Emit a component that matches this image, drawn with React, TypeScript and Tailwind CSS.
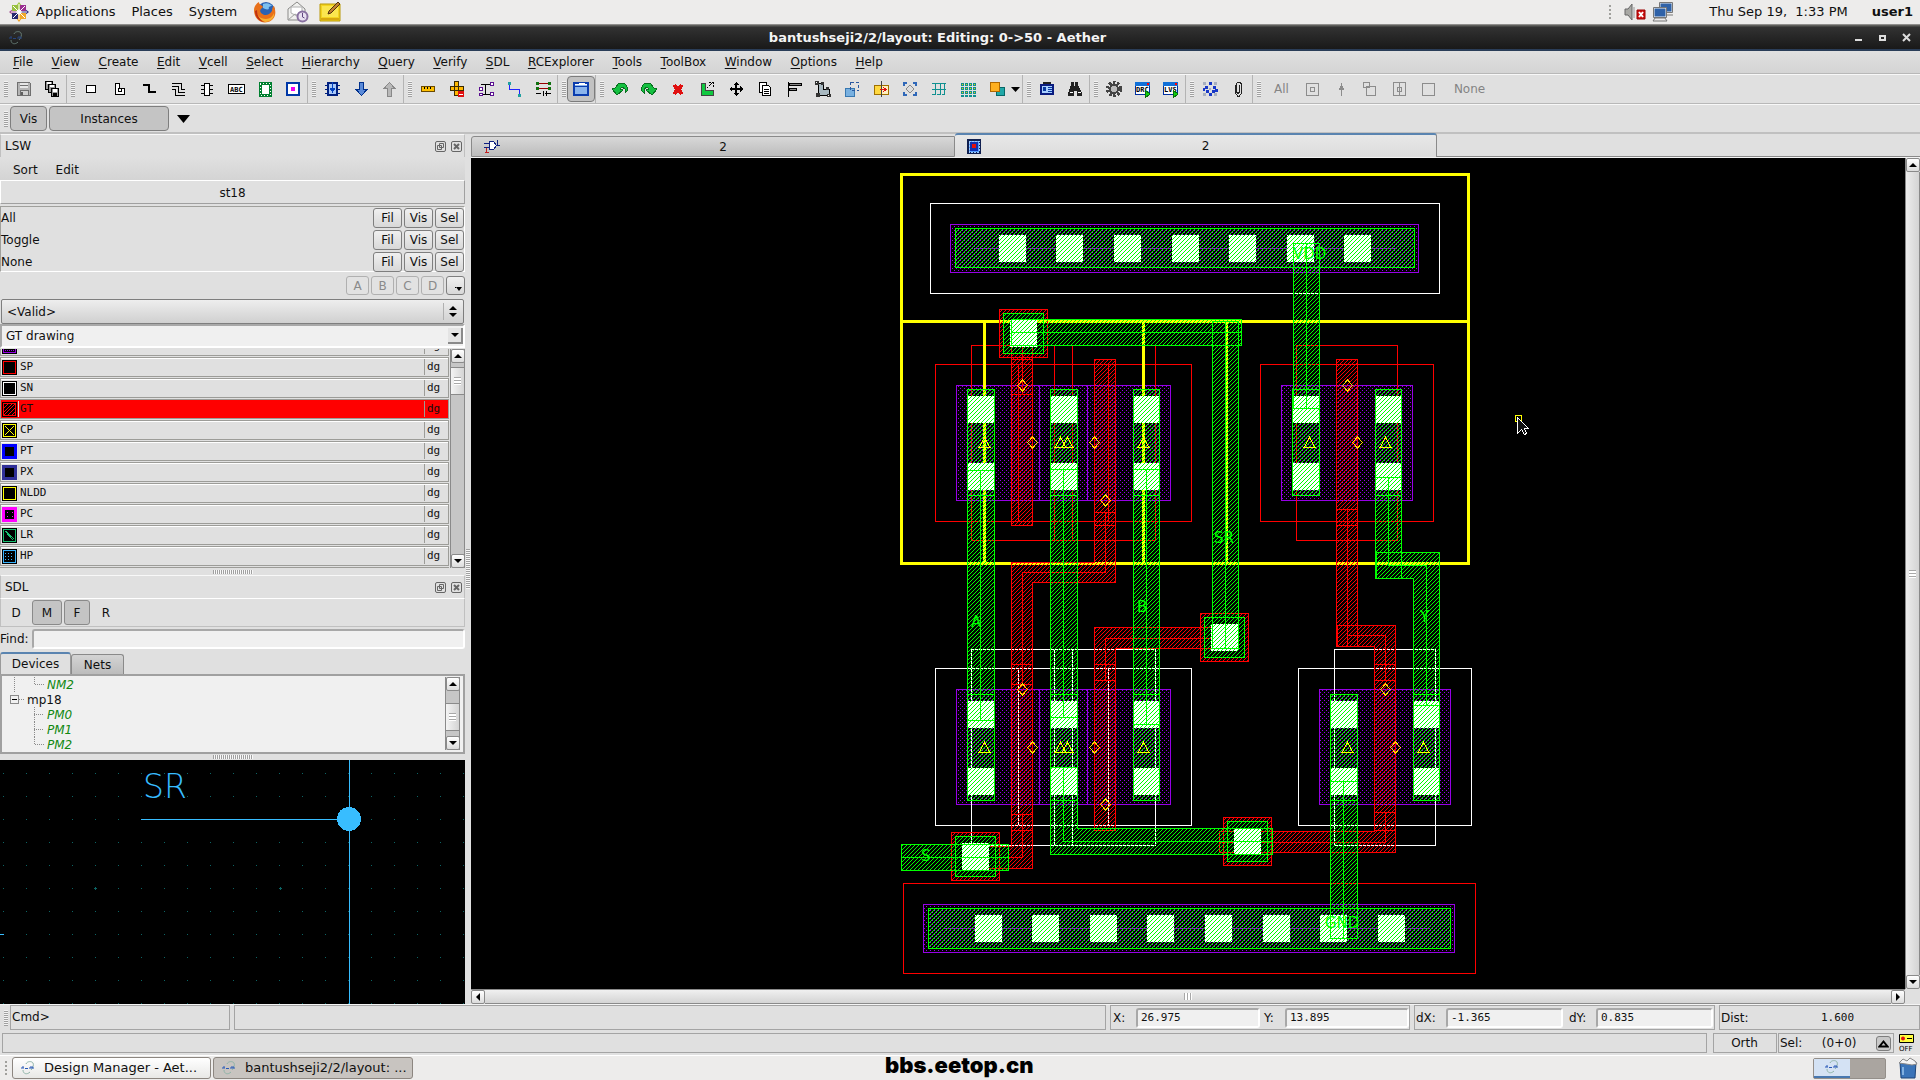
import React from 'react';

const MENUS = ['File', 'View', 'Create', 'Edit', 'Vcell', 'Select', 'Hierarchy', 'Query', 'Verify', 'SDL', 'RCExplorer', 'Tools', 'ToolBox', 'Window', 'Options', 'Help'];

const GREEN = '#00ff00';
const RED = '#ff0000';
const PURPLE = '#9600e6';
const YELLOW = '#ffff00';
const WHITE = '#ffffff';

/* ---------- toolbar icons, all on a 20x20 grid ---------- */

const ICONS: Record<string, React.ReactNode> = {
  save: (
    <>
      <path d="M3.5 3.5h12l1 1v12h-13z" fill="#b4b4b4" stroke="#707070" />
      <path d="M6 4h8v5H6z" fill="#e6e6e6" />
      <path d="M6 6.5h8M6 11.5h8v5H6z" stroke="#707070" fill="#d0d0d0" />
      <path d="M7 13h2v3H7z" fill="#606060" />
    </>
  ),
  saveAll: (
    <>
      <path d="M3.500 2.500h7v8h-7z" fill="#999" stroke="#000" />
      <path d="M6.500 5.500h7v8h-7z" fill="#999" stroke="#000" />
      <path d="M9.500 9.500h7v8h-7z" fill="#999" stroke="#000" />
      <path d="M5 3h4v2H5zM8 6h4v2H8zM11 10h4v3h-4z" fill="#fff" />
      <path d="M11 14h4v3h-4z" fill="#000" />
    </>
  ),
  rect: <path d="M5.500 6.500h9v7h-9z" fill="#fff" stroke="#000" />,
  polygon: (
    <>
      <path d="M5.500 4.500h4v5h5v6h-9z" fill="#fff" stroke="#000" />
      <path d="M8.500 9.500h3v3h-3z" fill="#fff" stroke="#000" />
    </>
  ),
  path: <path d="M4 6h6v7h7" fill="none" stroke="#000" strokeWidth="2" />,
  bus: <path d="M4 4.500h9v6h4M4 7.500h6v6h7M4 10.500h3v6h10" fill="none" stroke="#000" />,
  chip: (
    <>
      <path d="M7.500 4.500h5v12h-5z" fill="#fff" stroke="#000" />
      <path d="M4 6.500h3M4 10.500h3M4 14.500h3M13 6.500h3M13 10.500h3M13 14.500h3" stroke="#000" />
    </>
  ),
  abc: (
    <>
      <path d="M2.500 5.500h16v9h-16z" fill="#fff" stroke="#000" />
      <text x="4" y="13" fontSize="7" fontWeight="bold" fontFamily="DejaVu Sans Mono, monospace">ABC</text>
    </>
  ),
  guard: (
    <>
      <path d="M5 4h10v12H5z" fill="#fff" stroke="#008030" strokeWidth="3" />
      <path d="M5 4h10v12H5z" fill="none" stroke="#fff" strokeDasharray="1 2" />
    </>
  ),
  pin: (
    <>
      <path d="M4 4h12v12H4z" fill="#fff" stroke="#0038a8" strokeWidth="2" />
      <path d="M8 8h4v4H8z" fill="#f000f0" />
    </>
  ),
  chipDown: (
    <>
      <path d="M6 4h9v12H6z" fill="#a8c8f8" stroke="#002080" strokeWidth="2" />
      <path d="M3 6.500h2M3 10.500h2M3 14.500h2M16 6.500h2M16 10.500h2M16 14.500h2" stroke="#002080" />
      <path d="M10.500 3v7M8 9h5l-2.500 4z" fill="#0040c0" stroke="#0040c0" />
    </>
  ),
  down: <path d="M8.500 3.500h4v7h3.500l-5.500 6-5.500-6h3.500z" fill="#5a8ad8" stroke="#00308c" />,
  up: <path d="M8.500 17.500h4v-8h3.500l-5.500-6-5.500 6h3.500z" fill="#b8b8b8" stroke="#888" />,
  ruler: (
    <>
      <path d="M3.500 7.500h13v5h-13z" fill="#ffc000" stroke="#6b4a00" />
      <path d="M6.500 8v2M9.500 8v2M12.500 8v2" stroke="#000" />
    </>
  ),
  rulerOff: (
    <>
      <path d="M7.500 2.500h4v14h-4zM3.500 7.500h13v4h-13z" fill="#ffb800" stroke="#3b2a00" />
      <circle cx="14" cy="15" r="3.500" fill="#e01010" />
      <path d="M12 15h4" stroke="#fff" />
    </>
  ),
  net: (
    <>
      <path d="M5 5.500h10M5 15.500h10M9.500 5v10" stroke="#000" />
      <path d="M3.500 8.500h3v3h-3zM14.500 3.500h3v3h-3zM3.500 14.500h3v2h-3zM14.500 13.500h3v3h-3z" fill="#fff" stroke="#5a1090" />
    </>
  ),
  wire: (
    <>
      <path d="M4.500 4v6h10v6" fill="none" stroke="#2222ff" />
      <path d="M3 3h3v3H3zM13 15h3v3h-3z" fill="#20a0a0" />
    </>
  ),
  align: (
    <>
      <path d="M4 4.500h13M4 9.500h13" stroke="#900" />
      <path d="M3 3h3v3H3zM15 3h3v3h-3zM3 8h3v3H3zM15 8h3v3h-3z" fill="#107010" />
      <path d="M3 14.500h5M12 14.500h6M10.500 12v5M13.500 12v5" stroke="#000" />
    </>
  ),
  window: (
    <>
      <path d="M3 4h14v12H3z" fill="#8ab4ec" stroke="#0a3cae" strokeWidth="2" />
      <path d="M4 5.500h12M8 4h6" stroke="#fff" />
      <path d="M3 7.500h14" stroke="#0a3cae" />
    </>
  ),
  undo: <path d="M2 10l5 6 6-5-3-1 2-2 3 2v4c4-3 3-7-1-10h-5L5 9z" fill="#14c040" stroke="#087020" />,
  redo: <path d="M18 10l-5 6-6-5 3-1-2-2-3 2v4C1 11 2 7 6 4h5l4 5z" fill="#14c040" stroke="#087020" />,
  remove: <path d="M6 6l8 9M14 6l-8 9" stroke="#e01010" strokeWidth="4" />,
  stretch: (
    <>
      <path d="M4 4h4v7h8v5H4z" fill="#10c840" stroke="#444" />
      <path d="M10 9l5-5M12 3.500h4v4" stroke="#000" fill="none" strokeDasharray="2 1" />
    </>
  ),
  move: (
    <>
      <path d="M10 4v12M4 10h12" stroke="#000" strokeWidth="2" />
      <path d="M10 3l3 3H7zM10 17l3-3H7zM3 10l3-3v6zM17 10l-3-3v6z" fill="#000" />
    </>
  ),
  copy: (
    <>
      <path d="M4.500 3.500h7v10h-7z" fill="#fff" stroke="#000" />
      <path d="M7.500 6.500h6l2 2v8h-8z" fill="#fff" stroke="#000" />
      <path d="M9 10.500h5M9 12.500h5M9 14.500h5" stroke="#000" />
    </>
  ),
  alignLeft: (
    <>
      <path d="M4.500 3v15" stroke="#000" />
      <path d="M5 4.500h12v2H5zM5 9.500h7v2H5z" fill="#888" stroke="#000" />
    </>
  ),
  reshape: (
    <>
      <path d="M5 4h5v6h6v6H6z" fill="#a8b8c0" stroke="#000" />
      <path d="M2 2h4v4H2zM8 3h3v3H8zM3 14h4v4H3zM14 15h4v3h-4zM13 8h3v3h-3z" fill="#333" />
      <path d="M3 3h1v1H3zM15 16h1v1h-1z" fill="#fff" />
    </>
  ),
  cut: (
    <>
      <path d="M3 9h9v8H3z" fill="#78b0e0" stroke="#3878b0" />
      <path d="M8.500 3.500h8v8h-8z" fill="none" stroke="#2858a0" strokeDasharray="3 2" />
    </>
  ),
  merge: (
    <>
      <path d="M3 6h7v9H3z" fill="#ffd840" stroke="#a07000" />
      <path d="M10 6h7v9h-7z" fill="#fff0c0" stroke="#a07000" />
      <path d="M10.500 2v16" stroke="#444" />
      <path d="M9 10.500h6M12 8l3 2.500-3 2.500" stroke="#e01010" fill="none" />
    </>
  ),
  rotate: (
    <>
      <path d="M10 6l4 4-4 4-4-4z" fill="#ddd" stroke="#888" />
      <path d="M4 7V4h3M13 4h3v3M16 13v3h-3M7 16H4v-3" fill="none" stroke="#3068b8" strokeWidth="2" />
    </>
  ),
  comb: <path d="M3 4.500h14M3 10.500h14M6.500 4v12M11.500 4v12M15.500 4v12M3 15.500h3M8 15.500h3M13 15.500h2" stroke="#109090" />,
  grid: (
    <path
      d="M3 4h2v2H3zM7 4h2v2H7zM11 4h2v2h-2zM15 4h2v2h-2zM3 8h2v2H3zM7 8h2v2H7zM11 8h2v2h-2zM15 8h2v2h-2zM3 12h2v2H3zM7 12h2v2H7zM11 12h2v2h-2zM15 12h2v2h-2zM3 16h2v1H3zM7 16h2v1H7zM11 16h2v1h-2zM15 16h2v1h-2z"
      fill="#e8d800"
      stroke="#109090"
    />
  ),
  order: (
    <>
      <path d="M9 8h8v8H9z" fill="#20a8a8" stroke="#086868" />
      <path d="M3.500 3.500h9v9h-9z" fill="#ffb020" stroke="#b06800" />
    </>
  ),
  card: (
    <>
      <path d="M4 6h12v9H4z" fill="#a8d0ff" stroke="#0a1c80" strokeWidth="2" />
      <path d="M6 4h8" stroke="#222" strokeWidth="2" />
      <path d="M6 8h3v4H6z" fill="#0838a0" />
      <path d="M11 8.500h4M11 10.500h4M11 12.500h4" stroke="#0838a0" />
    </>
  ),
  find: (
    <>
      <path d="M6 3h3v3l1 2V3h3v3l4 8v3h-5v-5h-3v5H3v-3l3-8z" fill="#222" />
      <path d="M5 13h3M13 13h3" stroke="#fff" />
    </>
  ),
  gear: (
    <>
      <circle cx="10" cy="10" r="6.500" fill="none" stroke="#444" strokeWidth="3" strokeDasharray="2.500 1.600" />
      <circle cx="10" cy="10" r="4" fill="#bbb" stroke="#444" strokeWidth="2" />
    </>
  ),
  drc: (
    <>
      <path d="M2.500 3.500h14v12h-14z" fill="#fff" stroke="#0030a0" />
      <path d="M2 3h15v4H2z" fill="#1070d8" />
      <path d="M14 4h2v2h-2z" fill="#f00" />
      <text x="3" y="13" fontSize="7" fontWeight="bold" fontFamily="DejaVu Sans Mono, monospace">DRC</text>
      <path d="M12 11l5 4-5 4z" fill="#10d010" stroke="#087008" />
    </>
  ),
  lvs: (
    <>
      <path d="M2.500 3.500h14v12h-14z" fill="#fff" stroke="#0030a0" />
      <path d="M2 3h15v4H2z" fill="#1070d8" />
      <path d="M14 4h2v2h-2z" fill="#f00" />
      <text x="3" y="13" fontSize="7" fontWeight="bold" fontFamily="DejaVu Sans Mono, monospace">LVS</text>
      <path d="M12 11l5 4-5 4z" fill="#10d010" stroke="#087008" />
    </>
  ),
  dots: (
    <>
      <path d="M3 3h3v3H3zM14 3h3v3h-3zM3 14h3v3H3zM14 14h3v3h-3zM9 9h2v2H9z" fill="#a8b0c0" />
      <path d="M9 3h3v3H9zM5 7h3v3H5zM13 7h3v3h-3zM3 9h2v3H3zM15 10h3v3h-3zM6 11h3v3H6zM12 11h3v3h-3zM9 14h3v3H9z" fill="#1838c8" />
    </>
  ),
  clip: <path d="M7.500 6v8l2 3h2l2-3V5l-1.500-2h-2L8.500 5v8l1.500 1.500 1.500-1.500V6" fill="none" stroke="#222" />,
  selInst: <path d="M4.500 4.500h12v12h-12zM8.500 8.500h4v4h-4z" fill="none" stroke="#8c8c8c" />,
  selPin: <path d="M10.500 4v13M10.500 6l-2 4h4z" fill="#8c8c8c" stroke="#8c8c8c" />,
  selShape: <path d="M3.500 3.500h6v5h-6zM6.500 7.500h9v9h-9z" fill="none" stroke="#8c8c8c" />,
  selVia: <path d="M4.500 3.500h12v13h-12zM10.500 3v13M8.500 8.500h4v4h-4z" fill="none" stroke="#8c8c8c" />,
  selBox: <path d="M4.500 4.500h12v12h-12z" fill="none" stroke="#8c8c8c" />,
};

const TOOL_GROUPS = [
  ['save', 'saveAll'],
  ['rect', 'polygon', 'path', 'bus', 'chip', 'abc', 'guard', 'pin'],
  ['chipDown', 'down', 'up'],
  ['ruler', 'rulerOff', 'net', 'wire', 'align'],
  ['window'],
  ['undo', 'redo', 'remove', 'stretch', 'move', 'copy', 'alignLeft', 'reshape', 'cut', 'merge', 'rotate', 'comb', 'grid', 'order'],
  ['card', 'find'],
  ['gear', 'drc', 'lvs'],
  ['dots', 'clip'],
];

const Icon: React.FC<{ name: string }> = ({ name }) => (
  <svg width="20" height="20" viewBox="0 0 20 20" shapeRendering="crispEdges">
    {ICONS[name]}
  </svg>
);

const Handle: React.FC = () => (
  <div className="w-[9px] flex justify-end items-center pr-px">
    <div className="w-1 h-4 bg-[repeating-linear-gradient(0deg,#a0a0a0_0px_1px,#f4f4f4_1px_2px)]"></div>
  </div>
);

const HGrip: React.FC = () => (
  <div className="flex items-center justify-center h-full">
    <div className="w-10 h-1 bg-[repeating-linear-gradient(90deg,#a0a0a0_0px_1px,#f8f8f8_1px_2px)]"></div>
  </div>
);

const AetherLogo: React.FC = () => (
  <svg width="16" height="16" viewBox="0 0 16 16" fill="none">
    <path d="M6 4C7 1 12 1 13 3c1 2 0 5-2 7M3 10c0 4 4 5 7 2" stroke="#8fb4a8" strokeWidth="1" />
    <path d="M1 8h3M5 8.500h3M9 8h5M2 7h2M10 7h3" stroke="#2858b8" strokeWidth="1" />
  </svg>
);

const TopPanel: React.FC = () => (
  <div className="h-[25px] flex items-center bg-[#edeceb] border-b border-[#8f8e8c] text-[13px] leading-4 pl-2 pr-[7px] pb-px shrink-0">
    <svg width="22" height="22" viewBox="0 0 22 22">
      <path d="M11 1l3 4-3 4-3-4z" fill="#a0c840" />
      <path d="M11 21l3-4-3-4-3 4z" fill="#f0a020" />
      <path d="M1 11l4-3 4 3-4 3z" fill="#a04890" />
      <path d="M21 11l-4-3-4 3 4 3z" fill="#303080" />
      <path d="M4 4h6v6H4z" fill="#98c040" />
      <path d="M12 4h6v6h-6z" fill="#9a3090" />
      <path d="M4 12h6v6H4z" fill="#282870" />
      <path d="M12 12h6v6h-6z" fill="#f0a828" />
      <path d="M11 3v16M3 11h16M5 5l12 12M17 5L5 17" stroke="#fff" strokeWidth="1" />
    </svg>
    <nav className="flex ml-[6px] gap-4">
      <button>Applications</button>
      <button>Places</button>
      <button>System</button>
    </nav>
    <div className="flex items-center gap-[10px] ml-4">
      <svg width="24" height="22" viewBox="0 0 24 22">
        <circle cx="13" cy="10" r="9" fill="#2a62b4" />
        <path d="M10 3c4-2 8 0 9 2-2 0-4 1-3 3-2 1-4 0-6-1z" fill="#7cc0f0" />
        <path d="M1 9C1 5 4 2 6 1c0 3 3 3 4 5-2 2-4 3-2 6 3 3 8 3 11-2 0-3 1-5 2-5 3 7 1 14-6 16C8 23 1 18 1 9z" fill="#e8701a" />
        <path d="M3 8c0 6 4 10 10 10 4 0 7-3 8-6 1 5-4 9-9 9C6 21 2 15 3 8z" fill="#f8b030" />
        <path d="M2 10c0 6 4 11 10 11-5-2-8-6-8-12z" fill="#c03010" />
      </svg>
      <svg width="22" height="22" viewBox="0 0 22 22">
        <path d="M1 8l9-7 8 7v11H1z" fill="#f0f0ee" stroke="#8a8a88" />
        <path d="M4 6h11v6l-5 3-6-3z" fill="#fff" stroke="#b0b0b0" />
        <path d="M1 19l7-6 10 6" fill="none" stroke="#a0a0a0" />
        <circle cx="15.500" cy="15.500" r="5" fill="#e8e0f0" stroke="#8870a0" strokeWidth="2" />
        <path d="M15.500 12v4l2 1" stroke="#604880" fill="none" />
      </svg>
      <svg width="22" height="22" viewBox="0 0 22 22">
        <path d="M1 3h20v17H1z" fill="#f4d420" stroke="#b89808" />
        <path d="M3 5h16v11H3z" fill="#fbe650" />
        <path d="M2 17h18v2H2z" fill="#d8a810" />
        <path d="M9 13l1-3 9-9 2 2-9 9z" fill="#c08030" stroke="#503010" />
      </svg>
    </div>
    <div className="ml-auto flex items-center">
      <div className="w-1 h-4 bg-[radial-gradient(#a0a09c_1px,transparent_1px)] bg-[size:4px_4px] mr-3"></div>
      <svg width="22" height="20" viewBox="0 0 22 20">
        <path d="M1 7h3l4-5v16l-4-5H1z" fill="#a8a8a4" stroke="#666" />
        <path d="M10 5v11" stroke="#999" strokeWidth="1" />
        <path d="M13 8h8v9h-8z" fill="#cc1010" stroke="#900" />
        <path d="M15 10l4 5M19 10l-4 5" stroke="#fff" strokeWidth="2" />
      </svg>
      <svg className="ml-[6px] mr-[35px]" width="22" height="22" viewBox="0 0 22 22">
        <path d="M8 2h12v9H8z" fill="#2f62a8" stroke="#e8e8e8" />
        <path d="M7.500 1.500h13v10h-13zM10 14h11" fill="none" stroke="#777" />
        <path d="M2 7h12v9H2z" fill="#2f62a8" stroke="#f4f4f4" />
        <path d="M1.500 6.500h13v10h-13zM1 20h14l-2-3H3z" fill="none" stroke="#777" />
      </svg>
      <span className="whitespace-pre">Thu Sep 19,  1:33 PM</span>
      <span className="font-bold ml-6">user1</span>
    </div>
  </div>
);

const TitleBar: React.FC = () => (
  <div className="h-[26px] flex items-center bg-linear-to-b from-[#6a6a66] via-[#323232] via-10% to-[#191919] border-b-2 border-[#2a3d58] text-[#f4f4f4] pl-2 pr-[6px] pt-[2px] shrink-0">
    <div className="opacity-60"><AetherLogo /></div>
    <h1 className="flex-1 text-center text-[13px] leading-4 font-bold">bantushseji2/2/layout: Editing: 0-&gt;50 - Aether</h1>
    <div className="flex gap-[9px]">
      <button aria-label="Minimize">
        <svg width="15" height="16"><path d="M4 9h7v2H4z" fill="#ddd" /></svg>
      </button>
      <button aria-label="Maximize">
        <svg width="15" height="16"><path d="M5 6h5v4H5z" fill="none" stroke="#ddd" strokeWidth="2" /></svg>
      </button>
      <button aria-label="Close">
        <svg width="15" height="16"><path d="M4 4l7 7M11 4l-7 7" stroke="#ddd" strokeWidth="2" /></svg>
      </button>
    </div>
  </div>
);

const MenuBar: React.FC = () => (
  <nav className="h-[23px] pl-[13px] pt-[3px] bg-linear-to-b from-[#e0e0e0] to-[#d4d4d4] border-b border-[#b8b8b8] shrink-0">
    <div className="w-[870px] flex items-center justify-between">
      {MENUS.map((menu) => (
        <button key={menu} className="leading-4">
          <span className="underline underline-offset-2">{menu.charAt(0)}</span>
          {menu.slice(1)}
        </button>
      ))}
    </div>
  </nav>
);

const ToolBar: React.FC = () => (
  <div className="h-[30px] flex border-t border-t-[#f8f8f8] border-b border-b-[#b8b8b8] shrink-0">
    {TOOL_GROUPS.map((group, idx) => (
      <div key={idx} className="flex border-r border-[#b4b4b4]">
        <Handle />
        {group.map((name) => (
          <button
            key={name}
            aria-label={name}
            className={
              name === 'window'
                ? 'w-7 flex items-center justify-center bg-[#c2c2c2] border border-[#7c7c7c] rounded-sm my-px'
                : 'w-[29px] last:w-7 flex items-center justify-center'
            }
          >
            <Icon name={name} />
          </button>
        ))}
        {idx === 5 && (
          <button aria-label="More orders" className="w-[11px] flex items-center">
            <svg width="9" height="5"><path d="M0 0h9L4.500 5z" /></svg>
          </button>
        )}
      </div>
    ))}
    <Handle />
    <div className="flex items-center text-[#848484] pl-3">
      <button className="mr-[9px]">All</button>
      {['selInst', 'selPin', 'selShape', 'selVia', 'selBox'].map((name) => (
        <button key={name} aria-label={name} className="w-[29px] flex justify-center">
          <Icon name={name} />
        </button>
      ))}
      <button className="ml-[11px]">None</button>
    </div>
  </div>
);

const VisBar: React.FC = () => (
  <div className="h-[30px] flex border-t border-t-[#f8f8f8] border-b-2 border-b-[#c0c0c0] shrink-0">
    <Handle />
    <div className="flex items-center gap-[2px] pl-px">
      <button className="w-[37px] h-[25px] bg-[#c4c4c4] border border-[#7e7e7e] rounded-sm">Vis</button>
      <button className="w-[120px] h-[25px] bg-[#c4c4c4] border border-[#7e7e7e] rounded-sm">Instances</button>
      <button aria-label="Choose visible objects" className="pl-[6px]">
        <svg width="13" height="8"><path d="M0 0h13L6.500 8z" /></svg>
      </button>
    </div>
  </div>
);

/* ---------- left docks ---------- */

const DockTitle: React.FC<{ title: string }> = ({ title }) => (
  <div className="h-[23px] flex items-center border-x border-[#c0c0c0] border-t border-t-[#f8f8f8] pl-[4px] pr-[2px] gap-[5px] shrink-0">
    <h2 className="flex-1">{title}</h2>
    <button aria-label={'Float ' + title}>
      <svg width="11" height="11" viewBox="0 0 11 11" fill="none" stroke="#666">
        <rect x="0.500" y="0.500" width="10" height="10" rx="1.500" />
        <path d="M4.500 2.500h4v4h-4zM2.500 4.500h4v4h-4z" />
      </svg>
    </button>
    <button aria-label={'Close ' + title}>
      <svg width="11" height="11" viewBox="0 0 11 11" fill="none" stroke="#666">
        <rect x="0.500" y="0.500" width="10" height="10" rx="1.500" />
        <path d="M3 3l5 5M8 3l-5 5" strokeWidth="2" />
      </svg>
    </button>
  </div>
);

const ArrowButton: React.FC<{ label: string; d: string }> = ({ label, d }) => (
  <button aria-label={label} className="w-[14px] h-[14px] shrink-0 flex items-center justify-center bg-linear-to-b from-white to-[#dcdcdc] border border-[#8a8a8a] rounded-[2px]">
    <svg width="8" height="8"><path d={d} /></svg>
  </button>
);

const UP = 'M0 6h8L4 2z';
const DOWN = 'M0 2h8L4 6z';

const ListScroll: React.FC<{ thumb: string }> = ({ thumb }) => (
  <div className="w-[15px] flex flex-col bg-[#c6c6c6] border-x border-[#8a8a8a] items-center shrink-0">
    <ArrowButton label="Scroll up" d={UP} />
    <div className={'w-[13px] flex items-center justify-center bg-linear-to-r from-[#f4f4f4] to-[#d4d4d4] border-y border-[#8a8a8a] ' + thumb}>
      <div className="w-[7px] h-2 bg-[repeating-linear-gradient(180deg,#a8a8a8_0px_1px,#fff_1px_3px)]"></div>
    </div>
    <div className="flex-1"></div>
    <ArrowButton label="Scroll down" d={DOWN} />
  </div>
);

const LAYERS = [
  { name: 'TO', art: <><path d="M1.500 1.500h12v12h-12z" stroke={PURPLE} /><path d="M3 4h9M3 8h9M3 11h9" stroke={PURPLE} strokeDasharray="1 1" /></> },
  { name: 'SP', art: <path d="M1.500 1.500h12v12h-12z" stroke={RED} /> },
  { name: 'SN', art: <path d="M1.500 1.500h12v12h-12z" stroke={WHITE} /> },
  { name: 'GT', art: <><path d="M1.500 1.500h12v12h-12z" stroke={RED} /><path d="M2 6l4-4M2 10l8-8M2 13L13 2M6 13l7-7M10 13l3-3" stroke={RED} /></> },
  { name: 'CP', art: <path d="M1.500 1.500h12v12h-12zM3 3l9 9M12 3l-9 9" stroke={YELLOW} /> },
  { name: 'PT', art: <path d="M1.500 1.500h12v12h-12z" stroke="#0000ff" strokeWidth="3" /> },
  { name: 'PX', art: <path d="M1.500 1.500h12v12h-12z" stroke="#303098" strokeWidth="3" /> },
  { name: 'NLDD', art: <path d="M1.500 1.500h12v12h-12z" stroke={YELLOW} /> },
  { name: 'PC', art: <><path d="M1.500 1.500h12v12h-12z" stroke="#ff00ff" strokeWidth="3" /><path d="M5 5.500h6M5 9.500h6" stroke="#ff00ff" strokeDasharray="1 4" /></> },
  { name: 'LR', art: <path d="M1.500 1.500h12v12h-12zM3 3l8 9M4 3l8 8" stroke="#18c070" /> },
  { name: 'HP', art: <><path d="M1.500 1.500h12v12h-12z" stroke="#38b4ff" /><path d="M3 4.500h9M3 7.500h9M3 10.500h9" stroke="#38b4ff" strokeDasharray="1 2" /></> },
];

const LswDock: React.FC = () => (
  <section className="flex flex-col shrink-0">
    <DockTitle title="LSW" />
    <nav className="h-[23px] flex items-center gap-[18px] pl-[13px] pt-[2px] bg-linear-to-b from-[#e0e0e0] to-[#d4d4d4]">
      <button>Sort</button>
      <button>Edit</button>
    </nav>
    <div className="h-6 leading-6 text-center border border-[#a0a0a0] border-t-white border-l-white">st18</div>
    <div className="mt-[2px] h-[66px] border border-[#a0a09c] border-b-white border-r-white">
      {['All', 'Toggle', 'None'].map((row) => (
        <div key={row} className="h-[22px] flex items-center gap-[2px]">
          <span className="flex-1">{row}</span>
          {['Fil', 'Vis', 'Sel'].map((btn) => (
            <button key={btn} className="w-[29px] h-5 leading-4 bg-linear-to-b from-[#f0f0f0] to-[#d8d8d8] border border-[#7e7e7e] rounded-[3px]">{btn}</button>
          ))}
        </div>
      ))}
    </div>
    <div className="h-[27px] flex items-center justify-end gap-[2px]">
      {['A', 'B', 'C', 'D'].map((btn) => (
        <button key={btn} className="w-[23px] h-[19px] leading-4 text-[#8a8a8a] bg-[#e2e2e2] border border-[#b0b0b0] rounded-[3px]">{btn}</button>
      ))}
      <button aria-label="More sets" className="w-[19px] h-[19px] flex items-end justify-end p-[2px] bg-linear-to-b from-[#f0f0f0] to-[#d8d8d8] border border-[#7e7e7e] rounded-[3px]">
        <svg width="7" height="5"><path d="M1 0h6L4 4zM0 0h1v1H0z" /></svg>
      </button>
    </div>
    <div className="h-[25px] flex items-center border border-[#7e7e7e] rounded-[2px] bg-linear-to-b from-[#eeeeee] to-[#d0d0d0] mx-px pr-[6px]">
      <select aria-label="Layer filter" className="flex-1 appearance-none outline-none pl-[5px]">
        <option>&lt;Valid&gt;</option>
      </select>
      <svg width="14" height="17"><path d="M0.500 0v17" stroke="#b0b0b0" /><path d="M6 7h8l-4-4zM6 10h8l-4 4z" /></svg>
    </div>
    <div className="h-[24px] flex items-center bg-[#f0f0f0] border-2 border-[#a8a8a8] border-b-white border-r-white mb-px">
      <select aria-label="Current layer" className="flex-1 appearance-none outline-none pl-1">
        <option>GT drawing</option>
      </select>
      <div className="w-[15px] h-4 flex items-center justify-center bg-[#e4e4e4] border-r-2 border-b-2 border-[#8a8a8a]">
        <svg width="8" height="8"><path d={DOWN} /></svg>
      </div>
    </div>
    <div className="h-[219px] flex">
      <div className="flex-1 overflow-hidden">
        <ul className="-mt-[13px] font-['DejaVu_Sans_Mono',monospace] text-[11px]">
          {LAYERS.map((layer) => (
            <li
              key={layer.name}
              className={
                'h-5 mb-px mr-px flex items-center border border-[#9c9c98] pl-px ' +
                (layer.name === 'GT' ? 'bg-[#ff0000]' : 'bg-[#e0e0e0] inset-shadow-[0_1px_0_#fff]')
              }
            >
              <svg width="15" height="15" viewBox="0 0 15 15" fill="none" shapeRendering="crispEdges">
                <path d="M0 0h15v15H0z" fill="#000" />
                {layer.art}
              </svg>
              <span className="flex-1 ml-px pl-px border-l border-[#d8d8d8]">{layer.name}</span>
              <span className="w-6 border-l border-[#9c9c98] pl-[2px]">dg</span>
            </li>
          ))}
        </ul>
        <div className="h-px mr-px bg-[#9c9c98]"></div>
      </div>
      <ListScroll thumb="mt-1 h-7" />
    </div>
  </section>
);

const TREE = [
  { name: 'NM2', lines: 'M14.500 0v15M34.500 0v7.500h9' },
  { name: 'mp18', lines: '' },
  { name: 'PM0', lines: 'M34.500 0v15M34 7.500h9' },
  { name: 'PM1', lines: 'M34.500 0v15M34 7.500h9' },
  { name: 'PM2', lines: 'M34.500 0v7.500h9' },
];

const SdlDock: React.FC = () => (
  <section className="flex flex-col shrink-0">
    <DockTitle title="SDL" />
    <div className="h-[29px] flex items-center border border-[#c0c0c0] border-t-white">
      <button className="w-[30px] h-[25px]">D</button>
      <button className="w-[30px] h-[25px] bg-[#c4c4c4] border border-[#8a8a8a] rounded-[3px] ml-px">M</button>
      <button className="w-[26px] h-[25px] bg-[#c4c4c4] border border-[#8a8a8a] rounded-[3px] ml-[2px]">F</button>
      <button className="w-[32px] h-[25px]">R</button>
    </div>
    <div className="h-6 flex items-center gap-[3px]">
      <label htmlFor="find">Find:</label>
      <input id="find" className="flex-1 h-5 bg-[#f0f0f0] border-2 border-[#a8a8a8] border-b-white border-r-white rounded-[3px] outline-none" />
    </div>
    <div className="h-[23px] flex items-end">
      <button className="w-[71px] h-[22px] border-t-2 border-t-[#5a84b0] border-x border-[#9a9a9a] rounded-t-[3px]">Devices</button>
      <button className="w-[53px] h-5 bg-linear-to-b from-[#d4d4d4] to-[#bcbcbc] border border-b-0 border-[#8a8a8a] rounded-t-[3px]">Nets</button>
    </div>
    <div className="h-[80px] flex bg-[#f0f0f0] border-2 border-[#a0a0a0] px-[2px] pt-px pr-[3px] pb-[2px]">
      <ul className="flex-1">
        {TREE.map((node) => (
          <li key={node.name} className="h-[15px] flex items-center">
            {node.lines ? (
              <svg width="43" height="15" fill="none" shapeRendering="crispEdges">
                <path d={node.lines} transform="translate(-4)" stroke="#8a8a8a" strokeDasharray="1 1" />
              </svg>
            ) : (
              <svg width="23" height="15" fill="none" shapeRendering="crispEdges">
                <path d="M6.500 3.500h8v8h-8z" stroke="#8a8a8a" />
                <path d="M8 7.500h5" stroke="#000" />
                <path d="M15 7.500h6" stroke="#8a8a8a" strokeDasharray="1 1" />
              </svg>
            )}
            <span className={node.lines ? 'italic text-[#108810]' : ''}>{node.name}</span>
          </li>
        ))}
      </ul>
      <ListScroll thumb="mt-3 h-7" />
    </div>
  </section>
);

const NavView: React.FC = () => (
  <div className="flex-1 min-h-0 bg-black overflow-hidden">
    <svg className="w-full h-full" shapeRendering="crispEdges">
      <defs>
        <pattern id="navdots" x="3" y="13" width="23" height="23" patternUnits="userSpaceOnUse">
          <rect width="1" height="1" fill="#0c6464" />
        </pattern>
      </defs>
      <rect width="100%" height="100%" fill="url(#navdots)" />
      <path d="M94 128.500h3M95.500 127v3M279 128.500h3M280.500 127v3" stroke="#0c6464" />
      <path d="M349.500 0v2000M141 59.500h208M0 174.500h4" stroke="#38bdff" />
      <circle cx="349" cy="59" r="12" fill="#38bdff" />
      <text x="143" y="38" fontSize="33" fill="#38bdff" className="font-extralight">SR</text>
    </svg>
  </div>
);

/* ---------- layout view ---------- */

type BoxProps = { x: number; y: number; r: number; b: number; c: string; fill?: string };

const Box: React.FC<BoxProps> = ({ x, y, r, b, c, fill = 'none' }) => (
  <rect x={x + 0.5} y={y + 0.5} width={r - x} height={b - y} stroke={c} fill={fill} />
);

const Metal: React.FC<{ d: string }> = ({ d }) => <path d={d} stroke={GREEN} fill="url(#green)" />;
const Poly: React.FC<{ d: string }> = ({ d }) => <path d={d} stroke={RED} fill="url(#red)" />;

const Contact: React.FC<{ x: number; y: number; w?: number }> = ({ x, y, w = 27 }) => (
  <>
    <rect x={x} y={y} width={w} height="27" fill="#fff" />
    <rect x={x} y={y} width={w} height="27" fill="url(#green)" />
  </>
);

const Via: React.FC<{ x: number; y: number }> = ({ x, y }) => (
  <>
    <Box x={x} y={y} r={x + 48} b={y + 48} c={RED} fill="url(#red)" />
    <Box x={x + 4} y={y + 4} r={x + 44} b={y + 44} c={GREEN} fill="url(#green)" />
    <Contact x={x + 11} y={y + 11} />
  </>
);

const TRIANGLES = [
  [984, 447], [1060, 447], [1067, 447], [1143, 447], [1309, 447], [1385, 447],
  [984, 752], [1060, 752], [1067, 752], [1143, 752], [1347, 752], [1423, 752],
];

const DIAMONDS = [
  [1022, 385], [1032, 442], [1094, 442], [1105, 500], [1347, 385], [1357, 442],
  [1022, 689], [1032, 747], [1094, 747], [1105, 804], [1385, 689], [1395, 747],
];

const COLUMNS = [
  { x: 967, r: 994, y: 389 }, { x: 1050, r: 1077, y: 389 }, { x: 1133, r: 1159, y: 389 },
  { x: 1292, r: 1319, y: 389 }, { x: 1375, r: 1401, y: 389 },
  { x: 967, r: 994, y: 694 }, { x: 1050, r: 1077, y: 694 }, { x: 1133, r: 1159, y: 694 },
  { x: 1330, r: 1357, y: 694 }, { x: 1413, r: 1439, y: 694 },
];

const LayoutView: React.FC = () => (
  <svg className="w-full h-full" shapeRendering="crispEdges">
    <defs>
      <pattern id="green" width="4" height="4" patternUnits="userSpaceOnUse">
        <path d="M3 0h1v1H3zM2 1h1v1H2zM1 2h1v1H1zM0 3h1v1H0z" fill={GREEN} />
      </pattern>
      <pattern id="red" width="4" height="4" patternUnits="userSpaceOnUse">
        <path d="M3 0h1v1H3zM2 1h1v1H2zM1 2h1v1H1zM0 3h1v1H0z" fill={RED} />
      </pattern>
      <pattern id="purple" width="4" height="4" patternUnits="userSpaceOnUse">
        <path d="M0 0h1v1H0zM2 2h1v1H2z" fill={PURPLE} />
      </pattern>
    </defs>
    <g transform="translate(-471 -158)" fill="none">
      {/* active areas */}
      <Box x={950} y={224} r={1418} b={272} c={PURPLE} fill="url(#purple)" />
      <Box x={956} y={385} r={1170} b={500} c={PURPLE} fill="url(#purple)" />
      <Box x={1281} y={385} r={1412} b={500} c={PURPLE} fill="url(#purple)" />
      <Box x={956} y={689} r={1170} b={804} c={PURPLE} fill="url(#purple)" />
      <Box x={1319} y={689} r={1450} b={804} c={PURPLE} fill="url(#purple)" />
      <Box x={923} y={904} r={1454} b={952} c={PURPLE} fill="url(#purple)" />
      <path d="M1039.500 385v115M1087.500 385v115M1039.500 689v115M1087.500 689v115M974 248.500h421M945 928.500h485" stroke={PURPLE} />

      {/* implants */}
      <Box x={930} y={203} r={1439} b={293} c={WHITE} />
      <Box x={935} y={364} r={1108} b={521} c={RED} />
      <Box x={1018} y={364} r={1191} b={521} c={RED} />
      <Box x={971} y={345} r={1072} b={540} c={RED} />
      <Box x={1054} y={345} r={1155} b={540} c={RED} />
      <Box x={1260} y={364} r={1433} b={521} c={RED} />
      <Box x={1296} y={345} r={1397} b={540} c={RED} />
      <Box x={935} y={668} r={1108} b={825} c={WHITE} />
      <Box x={1018} y={668} r={1191} b={825} c={WHITE} />
      <Box x={971} y={649} r={1072} b={845} c={WHITE} />
      <Box x={1054} y={649} r={1155} b={845} c={WHITE} />
      <Box x={1298} y={668} r={1471} b={825} c={WHITE} />
      <Box x={1334} y={649} r={1435} b={845} c={WHITE} />
      <Box x={903} y={883} r={1475} b={973} c={RED} />

      {/* wells */}
      <path d="M901.500 174.500h567v389h-567zM901.500 321.500h567M984.500 321v242M1143.500 321v242M1226.500 321v242" stroke={YELLOW} strokeWidth="3" />

      {/* poly */}
      <Poly d="M1011.500 332.500h21v62h-21z" />
      <Poly d="M1011.500 359.500h21v166h-21z" />
      <Poly d="M1094.500 359.500h21v166h-21z" />
      <Poly d="M1336.500 359.500h21v166h-21z" />
      <Poly d="M1094.500 512.500h21v70h-83v102h-21v-122h83z" />
      <Poly d="M1011.500 664.500h21v166h-21z" />
      <Poly d="M1094.500 664.500h21v166h-21z" />
      <Poly d="M1374.500 664.500h21v166h-21z" />
      <Poly d="M1011.500 814.500h21v54h-57v-22h36z" />
      <Poly d="M1094.500 680.500v-53h130v21h-109v32z" />
      <Poly d="M1336.500 509.500h21v137h-21z" />
      <Poly d="M1337.500 625.500h58v55h-21v-34h-37z" />
      <Poly d="M1374.500 812.500h21v40h-176v-21h155z" />
      <path
        d="M1022.500 332v62M1105.500 512v60h-83v112M1105.500 680v-42h120M1022.500 814v43h-47M1347.500 509v137M1347 635.500h38.500v45M1385.500 812v30h-166"
        stroke={RED}
      />

      {/* contacts and metal */}
      <Box x={955} y={228} r={1414} b={267} c={GREEN} fill="url(#green)" />
      <Box x={928} y={908} r={1450} b={948} c={GREEN} fill="url(#green)" />
      {[999, 1056, 1114, 1172, 1229, 1287, 1344].map((x) => <Contact key={x} x={x} y={235} />)}
      {[975, 1032, 1090, 1147, 1205, 1263, 1320, 1378].map((x) => <Contact key={x} x={x} y={915} />)}
      {COLUMNS.map((col) => (
        <g key={col.x + '-' + col.y}>
          <Contact x={col.x} y={col.y + 7} />
          <Contact x={col.x} y={col.y + 74} />
          <Box x={col.x} y={col.y} r={col.r} b={col.y + 106} c={GREEN} fill="url(#green)" />
        </g>
      ))}
      <Via x={999} y={309} />
      <Via x={1200} y={613} />
      <Via x={1223} y={817} />
      <Via x={951} y={832} />
      <Metal d="M1293.500 243.500h26v165h-26z" />
      <Metal d="M1011.500 319.500h230v26h-230z" />
      <Metal d="M1212.500 321.500h26v327h-26z" />
      <Metal d="M967.500 470.500h27v250h-27z" />
      <Metal d="M1050.500 469.500h27v248h-27z" />
      <Metal d="M1133.500 469.500h26v255h-26z" />
      <Metal d="M1375.500 477.500h26v101h-26z" />
      <Metal d="M1376.500 552.500h63v153h-26v-127h-37z" />
      <Metal d="M1050.500 767.500h27v61h195v26h-222z" />
      <Metal d="M901.500 844.500h107v26h-107z" />
      <Metal d="M1330.500 781.500h27v157h-27z" />
      <path
        d="M1306.500 243v165M1011 332.500h230M1225.500 321v327M980.500 470v250M1063.500 469v248M1146.500 469v255M1388.500 477v88h38v140M1063.500 767v74h209M901 857.500h107M1343.500 781v157"
        stroke={GREEN}
      />

      {/* net labels */}
      <g fill={GREEN} fontSize="15">
        <text x="1293" y="259">VDD</text>
        <text x="971" y="627">A</text>
        <text x="1137" y="612">B</text>
        <text x="1214" y="543">SR</text>
        <text x="1420" y="622">Y</text>
        <text x="921" y="861">S</text>
        <text x="1325" y="928">GND</text>
      </g>

      {/* edge marks */}
      {TRIANGLES.map(([x, y]) => <path key={x + '-' + y} d={`M${x - 5} ${y + 0.5}h11l-5.500 -10z`} stroke={YELLOW} />)}
      {DIAMONDS.map(([x, y]) => <path key={x + '-' + y} d={`M${x + 0.5} ${y - 5}l5 5.500l-5 5.500l-5 -5.500z`} stroke="#ffd800" />)}

      {/* pointer */}
      <Box x={1515} y={415} r={1521} b={421} c={YELLOW} />
      <path d="M1517.500 417.500v16l4-4 3 5 2-1-2-5h4z" fill="#111" stroke="#fff" />
    </g>
  </svg>
);

const ViewTabs: React.FC = () => (
  <div className="h-6 flex items-end border-b border-[#f4f4f4] shrink-0">
    <button className="w-[484px] h-[21px] flex items-center border border-[#8a8a8a] rounded-tl-[3px] bg-linear-to-b from-[#d8d8d8] to-[#bcbcbc] pl-3">
      <svg width="16" height="16" viewBox="0 0 16 16" fill="none" shapeRendering="crispEdges">
        <path d="M5.500 2.500h4l3 4-3 4h-4z" fill="#fff" stroke="#102080" />
        <path d="M0 4.500h5M0 8.500h5M13 6.500h3M13.500 1v5" stroke="#102080" />
        <path d="M2.500 9v5M1 13.500h4" stroke="#c02020" />
      </svg>
      <span className="flex-1 text-center pr-2">2</span>
    </button>
    <button className="w-[482px] h-6 flex items-center border-t-2 border-t-[#5a84b0] border-r border-r-[#8a8a8a] rounded-t-[3px] bg-linear-to-b from-[#e8e8e8] to-[#dcdcdc] pl-3">
      <svg width="14" height="15" viewBox="0 0 14 15" shapeRendering="crispEdges">
        <path d="M0 0h14v15H0z" fill="#102050" />
        <path d="M2 2h10v11H2z" fill="#58a0ff" stroke="#9cc8ff" strokeDasharray="2 1" />
        <path d="M3 3h8v9H3z" fill="#1030b0" />
        <path d="M5 5h4v4H5z" fill="#e01010" />
      </svg>
      <span className="flex-1 text-center pr-[6px]">2</span>
    </button>
    <div className="flex-1 h-px bg-[#8a8a8a]"></div>
  </div>
);

const Workspace: React.FC = () => (
  <main className="flex-1 min-w-0 flex flex-col">
    <ViewTabs />
    <div className="flex-1 min-h-0 flex">
      <div className="flex-1 min-w-0 bg-black overflow-hidden">
        <LayoutView />
      </div>
      <div className="w-[15px] flex flex-col items-center border-l border-[#8a8a8a]">
        <ArrowButton label="Pan up" d={UP} />
        <div className="flex-1 w-full flex items-center justify-center bg-linear-to-r from-[#ececec] to-[#d4d4d4] border-r border-[#8a8a8a]">
          <div className="w-[7px] h-2 bg-[repeating-linear-gradient(180deg,#a8a8a8_0px_1px,#fff_1px_3px)]"></div>
        </div>
        <ArrowButton label="Pan down" d={DOWN} />
      </div>
    </div>
    <div className="h-[15px] flex items-center mr-[15px] border-t border-[#8a8a8a] shrink-0">
      <ArrowButton label="Pan left" d="M6 0v8L2 4z" />
      <div className="flex-1 h-full flex items-center justify-center bg-linear-to-b from-[#f0f0f0] to-[#d4d4d4] border-b border-[#8a8a8a]">
        <div className="w-2 h-[7px] bg-[repeating-linear-gradient(90deg,#a8a8a8_0px_1px,#fff_1px_3px)]"></div>
      </div>
      <ArrowButton label="Pan right" d="M2 0v8l4-4z" />
    </div>
  </main>
);

/* ---------- status bars ---------- */

const FIELD = "h-5 bg-[#f0f0f0] border-2 border-[#a8a8a8] border-b-white border-r-white rounded-[3px] outline-none pl-[3px] font-['DejaVu_Sans_Mono',monospace] text-[11px]";

const Coord: React.FC<{ label: string; value: string; width: string; gap: string }> = ({ label, value, width, gap }) => (
  <>
    <label htmlFor={label} className={gap}>{label}:</label>
    <input id={label} defaultValue={value} className={FIELD + ' ' + width} />
  </>
);

const StatusBars: React.FC = () => (
  <footer className="shrink-0 border-t border-[#f4f4f4] bg-[#e0e0e0]">
    <div className="h-[25px] flex">
      <Handle />
      <div className="w-[220px] border border-[#a4a4a4] leading-[22px] pl-px ml-px">Cmd&gt;</div>
      <div className="flex-1 ml-[4px] border border-[#a4a4a4]"></div>
      <div className="w-[300px] flex items-center ml-1 border border-[#a4a4a4]">
        <Coord label="X" value="26.975" width="w-[124px]" gap="w-[25px] pl-[2px]" />
        <Coord label="Y" value="13.895" width="w-[124px]" gap="w-[25px] pl-1" />
      </div>
      <div className="w-[301px] flex items-center ml-1 border border-[#a4a4a4]">
        <Coord label="dX" value="-1.365" width="w-[117px]" gap="w-[31px] pl-px" />
        <Coord label="dY" value="0.835" width="w-[117px]" gap="w-[33px] pl-[6px]" />
      </div>
      <div className="w-[201px] flex items-center ml-1 border border-[#a4a4a4] pl-px">
        <span className="w-[100px]">Dist:</span>
        <span className="font-['DejaVu_Sans_Mono',monospace] text-[11px]">1.600</span>
      </div>
    </div>
    <div className="h-[25px] flex items-center pt-[3px] pb-[2px]">
      <div className="flex-1 h-5 ml-[2px] border border-[#a4a4a4]"></div>
      <div className="w-16 h-5 leading-[18px] ml-[6px] text-center border border-[#a4a4a4] pr-px">Orth</div>
      <div className="w-[116px] h-5 flex items-center ml-px border border-[#a4a4a4] pl-px pr-[2px]">
        <span>Sel:</span>
        <span className="flex-1 text-center">(0+0)</span>
        <button aria-label="Selection details" className="w-[15px] h-[15px] flex items-center justify-center bg-[#c8c8c8] border border-[#7e7e7e] rounded-[3px]">
          <svg width="11" height="9" fill="none"><path d="M1.500 7.500h8l-4-5z" stroke="#000" strokeWidth="2" /></svg>
        </button>
      </div>
      <button aria-label="Gravity off" className="ml-px mr-[3px]">
        <svg width="22" height="18" viewBox="0 0 22 18">
          <path d="M4.500 0.500h14v8h-14z" fill="#ffff40" stroke="#000" />
          <circle cx="8" cy="4.500" r="2" fill="#e01010" />
          <path d="M12 4.500h5" stroke="#000" />
          <text x="4" y="17" fontSize="7" fontFamily="DejaVu Sans, sans-serif">OFF</text>
        </svg>
      </button>
    </div>
  </footer>
);

const TaskBar: React.FC = () => (
  <div className="h-[25px] flex items-center bg-[#edeceb] border-t border-white text-[13px] leading-4 whitespace-nowrap shrink-0">
    <div className="w-1 h-4 mx-1 bg-[radial-gradient(#a0a09c_1px,transparent_1px)] bg-[size:4px_4px]"></div>
    <button className="w-[199px] h-[22px] flex items-center gap-2 pl-[7px] bg-linear-to-b from-white to-[#e8e8e6] border border-[#8c8680] rounded-[3px]">
      <AetherLogo />
      Design Manager - Aet...
    </button>
    <button className="w-[200px] h-[22px] flex items-center gap-2 pl-[7px] ml-[2px] bg-[#c8c4c0] border border-[#8c8680] rounded-[3px]">
      <AetherLogo />
      bantushseji2/2/layout: ...
    </button>
    <a href="#bbs" className="self-start ml-[472px] mr-auto font-['Inter',sans-serif] font-black text-[22px] leading-[18px] text-black">bbs.eetop.cn</a>
    <div className="w-[73px] h-[21px] flex border border-[#948f8a] bg-[#aaa5a0] rounded-[2px]">
      <button aria-label="Workspace 1" className="w-9 flex items-center justify-center bg-[#d4e2f4] border-b-2 border-[#4878b0]">
        <AetherLogo />
      </button>
      <button aria-label="Workspace 2" className="flex-1"></button>
    </div>
    <button aria-label="Trash" className="ml-3 mr-[2px]">
      <svg width="20" height="22" viewBox="0 0 20 22">
        <path d="M2 5h16l-1 16H3z" fill="#3a74b8" stroke="#1c4478" />
        <path d="M1 6l4-4 4 2 3-3 5 3 2 3-5 1-6-1z" fill="#f4f4f4" stroke="#888" />
        <path d="M5 10v8" stroke="#80b0e0" strokeWidth="2" />
      </svg>
    </button>
  </div>
);

const App: React.FC = () => (
  <div className="h-screen min-h-[900px] flex flex-col bg-[#e0e0e0] text-[#101010] font-['DejaVu_Sans',sans-serif] text-xs leading-4 overflow-hidden">
    <TopPanel />
    <TitleBar />
    <MenuBar />
    <ToolBar />
    <VisBar />
    <div className="flex-1 min-h-0 flex">
      <aside className="w-[465px] flex flex-col shrink-0">
        <LswDock />
        <div className="h-[7px] shrink-0"><HGrip /></div>
        <SdlDock />
        <div className="h-[6px] shrink-0"><HGrip /></div>
        <NavView />
      </aside>
      <div className="w-[6px] flex items-center justify-center shrink-0">
        <div className="w-1 h-10 bg-[repeating-linear-gradient(180deg,#a0a0a0_0px_1px,#f8f8f8_1px_2px)]"></div>
      </div>
      <Workspace />
    </div>
    <StatusBars />
    <TaskBar />
  </div>
);

export default App;
